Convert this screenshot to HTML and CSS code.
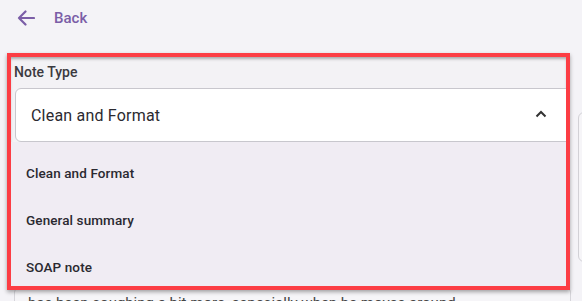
FILE: index.html
```html
<!DOCTYPE html>
<html>
<head>
<meta charset="utf-8">
<link rel="stylesheet" href="styles.css">
</head>
<body>
<header class="header">
  <svg class="back-icon" width="18" height="16" viewBox="0 0 18 16"><path d="M17 8H2M8.5 1.5L2 8l6.5 6.5" fill="none" stroke="#7b5ea7" stroke-width="2.2" stroke-linecap="round" stroke-linejoin="round"/></svg>
  <span class="back-text">Back</span>
</header>
<div class="layout">
  <div class="main">
    <div class="highlight">
      <div class="label">Note Type</div>
      <div class="select">
        <span class="select-value">Clean and Format</span>
        <svg class="chevron" width="12" height="8" viewBox="0 0 12 8"><path d="M1.5 6.5L6 2l4.5 4.5" fill="none" stroke="#333" stroke-width="2"/></svg>
      </div>
      <ul class="menu">
        <li class="menu-item">Clean and Format</li>
        <li class="menu-item">General summary</li>
        <li class="menu-item">SOAP note</li>
      </ul>
    </div>
    <div class="textarea">has been coughing a bit more, especially when he moves around</div>
  </div>
  <div class="side-card"></div>
</div>
</body>
</html>
```
FILE: styles.css
```css
* { box-sizing: border-box; }
html, body { margin: 0; padding: 0; }
body {
  background: #f4f3f7;
  font-family: Roboto, "Noto Sans", sans-serif;
  color: #1d1b20;
  width: 582px;
  height: 301px;
  overflow: hidden;
}
.header {
  height: 35px;
  display: flex;
  align-items: center;
  padding-left: 17px;
}
.back-icon { display: block; }
.back-text {
  margin-left: 19px;
  font-size: 15px;
  font-weight: 500;
  color: #7b5ea7;
}
.layout {
  display: flex;
  margin-top: 18px;
}
.main {
  width: 571px;
  flex-shrink: 0;
  padding-left: 7px;
}
.highlight {
  width: 563px;
  height: 237px;
  border: 4px solid #fc3d44;
  background: #f3f2f5;
  overflow: hidden;
  box-shadow: 0 2px 4px rgba(0,0,0,0.35), inset 0 3px 3px -1px rgba(0,0,0,0.3);
  position: relative;
  z-index: 2;
}
.label {
  padding: 6px 0 0 3px;
  font-size: 14px;
  line-height: 18px;
  font-weight: 500;
  color: #3b3a40;
  height: 31px;
}
.select {
  margin-left: 4px;
  margin-right: -10px;
  height: 54px;
  background: #fff;
  border: 1px solid #c8c7cd;
  border-radius: 6px;
  display: flex;
  align-items: center;
  padding-left: 15px;
  padding-right: 28px;
}
.select-value {
  flex: 1;
  font-size: 16px;
  letter-spacing: 0.2px;
  color: #2b2a30;
}
.chevron { display: block; margin-top: -2px; }
.menu {
  list-style: none;
  margin: 0;
  padding: 7px 0 0;
  background: #f0ecf3;
}
.menu-item {
  height: 47px;
  display: flex;
  align-items: center;
  padding-left: 15px;
  font-size: 13.5px;
  letter-spacing: 0.1px;
  font-weight: 500;
  color: #2a2930;
}
.textarea {
  margin-top: -2px;
  margin-left: 7px;
  height: 40px;
  border: 1px solid #d6d5da;
  border-radius: 4px;
  padding: 5px 0 0 13px;
  font-size: 15px;
  color: #444;
  background: #f6f5f8;
  white-space: nowrap;
  position: relative;
  z-index: 1;
}
.side-card {
  margin-top: 59px;
  margin-left: 7px;
  width: 40px;
  height: 150px;
  border: 1px solid #d2d1d6;
  border-radius: 6px;
  background: #f6f5f8;
  flex-shrink: 0;
}
```
